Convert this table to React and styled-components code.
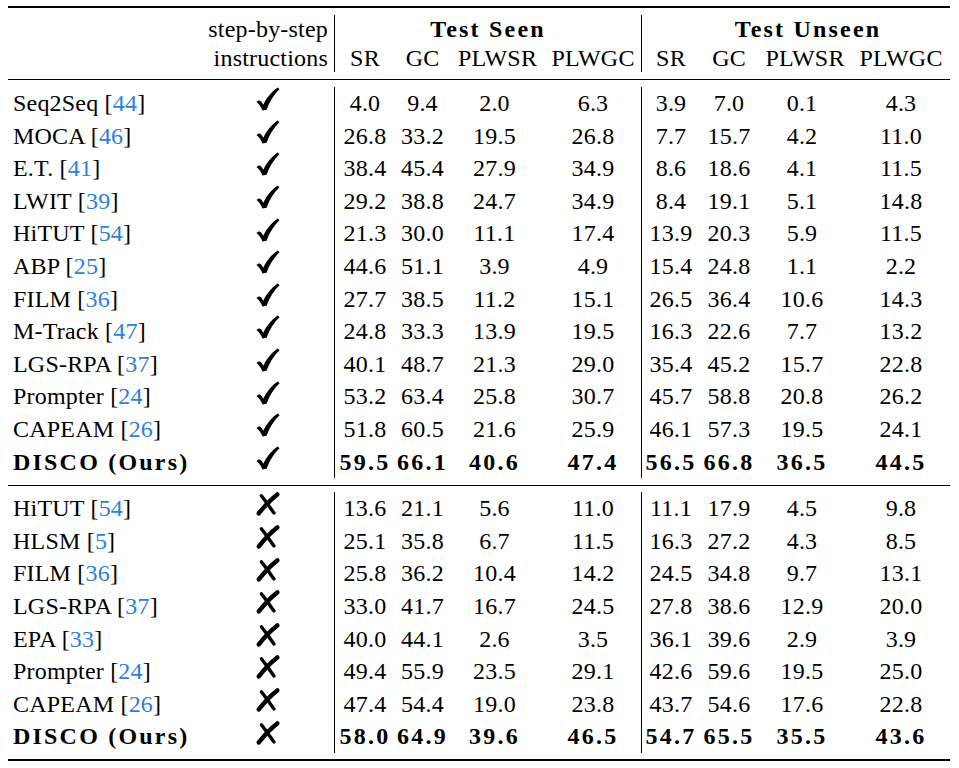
import React from 'react';
import styled, { createGlobalStyle } from 'styled-components';

const GlobalStyle = createGlobalStyle`
  body {
    margin: 0;
    background: #fff;
  }
`;

const Page = styled.div`
  padding: 6px 0 0 8px;
`;

const Table = styled.table`
  width: 942px;
  table-layout: fixed;
  border-collapse: separate;
  border-spacing: 0;
  font-family: 'Liberation Serif', 'Times New Roman', serif;
  font-size: 24px;
  color: #000;
  letter-spacing: 0.2px;
`;

const RuleCell = styled.td`
  padding: ${(p) => p.$above}px 0 ${(p) => p.$below}px;
  line-height: 0;
  font-size: 0;
`;

const Line = styled.div`
  height: ${(p) => p.$weight}px;
  background: #000;
`;

const HeadRow = styled.tr`
  height: 28.5px;
`;

const BodyRow = styled.tr`
  height: 32.6px;
`;

const Cell = styled.td`
  padding: 0 ${(p) => p.$padRight || 0}px 0 ${(p) => p.$padLeft || 0}px;
  text-align: ${(p) => p.$align || 'center'};
  vertical-align: middle;
  white-space: nowrap;
  line-height: 28.5px;
  border-left: ${(p) => (p.$sep ? '1px solid #000' : 'none')};
  font-weight: ${(p) => (p.$bold ? 700 : 400)};
  letter-spacing: ${(p) => (p.$bold ? '2.2px' : '0.2px')};
`;

const Cite = styled.span`
  color: #2d7fdb;
`;

const Mark = styled.svg`
  display: block;
  margin: 0 auto;
  width: 24px;
  height: 24px;
  position: relative;
  top: -4px;
  left: 1px;
`;

const Check = () => (
  <Mark viewBox="0 0 24 24">
    <path
      d="M0.5 15C2.5 12.4 4.9 13.1 6.3 16.1L7.2 17.8C10.4 10.6 15.4 4.8 21.5 0.4L23.6 2.3C17.7 7.9 13.6 14.3 10.6 22.7L6.5 23.6C5 20 3.2 17 0.5 15Z"
      fill="#000"
    />
  </Mark>
);

const Cross = () => (
  <Mark viewBox="0 0 24 24">
    <path d="M21.3 2.4C14 8 8.2 14.4 2.8 21.4" stroke="#000" strokeWidth="4.4" strokeLinecap="round" fill="none" />
    <path d="M5.4 3.8C9.6 8.6 13.2 14.8 18 21" stroke="#000" strokeWidth="3.4" strokeLinecap="round" fill="none" />
  </Mark>
);

const withStep = [
  ['Seq2Seq', '44', ['4.0', '9.4', '2.0', '6.3'], ['3.9', '7.0', '0.1', '4.3']],
  ['MOCA', '46', ['26.8', '33.2', '19.5', '26.8'], ['7.7', '15.7', '4.2', '11.0']],
  ['E.T.', '41', ['38.4', '45.4', '27.9', '34.9'], ['8.6', '18.6', '4.1', '11.5']],
  ['LWIT', '39', ['29.2', '38.8', '24.7', '34.9'], ['8.4', '19.1', '5.1', '14.8']],
  ['HiTUT', '54', ['21.3', '30.0', '11.1', '17.4'], ['13.9', '20.3', '5.9', '11.5']],
  ['ABP', '25', ['44.6', '51.1', '3.9', '4.9'], ['15.4', '24.8', '1.1', '2.2']],
  ['FILM', '36', ['27.7', '38.5', '11.2', '15.1'], ['26.5', '36.4', '10.6', '14.3']],
  ['M-Track', '47', ['24.8', '33.3', '13.9', '19.5'], ['16.3', '22.6', '7.7', '13.2']],
  ['LGS-RPA', '37', ['40.1', '48.7', '21.3', '29.0'], ['35.4', '45.2', '15.7', '22.8']],
  ['Prompter', '24', ['53.2', '63.4', '25.8', '30.7'], ['45.7', '58.8', '20.8', '26.2']],
  ['CAPEAM', '26', ['51.8', '60.5', '21.6', '25.9'], ['46.1', '57.3', '19.5', '24.1']],
  ['DISCO (Ours)', null, ['59.5', '66.1', '40.6', '47.4'], ['56.5', '66.8', '36.5', '44.5']],
];

const withoutStep = [
  ['HiTUT', '54', ['13.6', '21.1', '5.6', '11.0'], ['11.1', '17.9', '4.5', '9.8']],
  ['HLSM', '5', ['25.1', '35.8', '6.7', '11.5'], ['16.3', '27.2', '4.3', '8.5']],
  ['FILM', '36', ['25.8', '36.2', '10.4', '14.2'], ['24.5', '34.8', '9.7', '13.1']],
  ['LGS-RPA', '37', ['33.0', '41.7', '16.7', '24.5'], ['27.8', '38.6', '12.9', '20.0']],
  ['EPA', '33', ['40.0', '44.1', '2.6', '3.5'], ['36.1', '39.6', '2.9', '3.9']],
  ['Prompter', '24', ['49.4', '55.9', '23.5', '29.1'], ['42.6', '59.6', '19.5', '25.0']],
  ['CAPEAM', '26', ['47.4', '54.4', '19.0', '23.8'], ['43.7', '54.6', '17.6', '22.8']],
  ['DISCO (Ours)', null, ['58.0', '64.9', '39.6', '46.5'], ['54.7', '65.5', '35.5', '43.6']],
];

const widths = [192, 134, 61, 55, 95, 96, 59, 58, 94, 98];
const metrics = ['SR', 'GC', 'PLWSR', 'PLWGC'];

const Rule = ({ above, below, weight }) => (
  <tr>
    <RuleCell colSpan={10} $above={above} $below={below}>
      <Line $weight={weight} />
    </RuleCell>
  </tr>
);

const Values = ({ values, bold }) =>
  values.map((v, i) => (
    <Cell key={i} $sep={i === 0} $bold={bold} $padRight={i === 2 ? 6 : 0}>
      {v}
    </Cell>
  ));

const Row = ({ row, mark }) => {
  const [name, cite, seen, unseen] = row;
  const bold = !cite;
  return (
    <BodyRow>
      <Cell $align="left" $padLeft={5} $bold={bold}>
        {name}
        {cite && (
          <>
            {' '}[<Cite>{cite}</Cite>]
          </>
        )}
      </Cell>
      <Cell>{mark}</Cell>
      <Values values={seen} bold={bold} />
      <Values values={unseen} bold={bold} />
    </BodyRow>
  );
};

export default function App() {
  return (
    <Page>
      <GlobalStyle />
      <Table>
        <colgroup>
          {widths.map((w, i) => (
            <col key={i} style={{ width: w }} />
          ))}
        </colgroup>
        <tbody>
          <Rule above={0} below={7} weight={2} />
          <HeadRow>
            <Cell />
            <Cell rowSpan={2} $align="right" $padRight={6}>
              step-by-step
              <br />
              instructions
            </Cell>
            <Cell colSpan={4} $sep $bold>
              Test Seen
            </Cell>
            <Cell colSpan={4} $sep $bold $padLeft={24}>
              Test Unseen
            </Cell>
          </HeadRow>
          <HeadRow>
            <Cell />
            {metrics.map((m, i) => (
              <Cell key={'s' + m} $sep={i === 0}>
                {m}
              </Cell>
            ))}
            {metrics.map((m, i) => (
              <Cell key={'u' + m} $sep={i === 0}>
                {m}
              </Cell>
            ))}
          </HeadRow>
          <Rule above={7} below={7} weight={1} />
          {withStep.map((r, i) => (
            <Row key={'a' + i} row={r} mark={<Check />} />
          ))}
          <Rule above={7} below={6} weight={1} />
          {withoutStep.map((r, i) => (
            <Row key={'b' + i} row={r} mark={<Cross />} />
          ))}
          <Rule above={6} below={0} weight={2} />
        </tbody>
      </Table>
    </Page>
  );
}
